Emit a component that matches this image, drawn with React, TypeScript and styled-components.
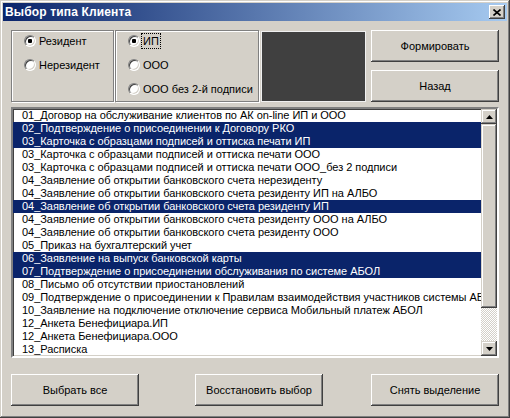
import React from "react";
import styled, { createGlobalStyle } from "styled-components";

const Global = createGlobalStyle`
  html, body { margin: 0; padding: 0; background: #d4d0c8; }
  * { box-sizing: border-box; }
`;

const FONT = `"Liberation Sans", Arial, sans-serif`;

const Window = styled.div`
  width: 510px;
  height: 418px;
  background: #d4d0c8;
  padding: 3px;
  display: flex;
  flex-direction: column;
  font-family: ${FONT};
  font-size: 11px;
  color: #000;
  box-shadow: inset -1px -1px #404040, inset 1px 1px #d4d0c8,
    inset -2px -2px #808080, inset 2px 2px #fff;
`;

const TitleBar = styled.div`
  height: 18px;
  display: flex;
  align-items: center;
  justify-content: space-between;
  padding: 0 2px 0 2px;
  background: linear-gradient(to right, #0a246a, #a6caf0);
`;

const TitleText = styled.span`
  color: #fff;
  font-weight: bold;
  font-size: 12px;
  letter-spacing: 0.15px;
`;

const CloseButton = styled.div`
  width: 16px;
  height: 14px;
  background: #d4d0c8;
  display: flex;
  align-items: center;
  justify-content: center;
  box-shadow: inset -1px -1px #404040, inset 1px 1px #fff,
    inset -2px -2px #808080, inset 2px 2px #d4d0c8;
`;

const Content = styled.div`
  flex: 1;
  display: flex;
  flex-direction: column;
  padding: 9px 8px 9px 8px;
`;

const TopRow = styled.div`
  display: flex;
  height: 72px;
`;

const Group = styled.div<{ $w: number; $ml?: number }>`
  width: ${(p) => p.$w}px;
  margin-left: ${(p) => p.$ml ?? 0}px;
  height: 72px;
  border: 1px solid #808080;
  box-shadow: inset 1px 1px #fff, 1px 1px #fff;
  display: flex;
  flex-direction: column;
  gap: 8px;
  padding: 2px 0 0 12px;
`;

const RadioRow = styled.div`
  height: 16px;
  display: flex;
  align-items: center;
  gap: 0;
  white-space: nowrap;
`;

const RadioCircle = styled.span<{ $on?: boolean }>`
  width: 12px;
  height: 12px;
  border-radius: 50%;
  background: #fff;
  border: 1px solid;
  border-color: #808080 #fff #fff #808080;
  box-shadow: inset 1px 1px #404040, inset -1px -1px #d4d0c8;
  display: flex;
  align-items: center;
  justify-content: center;
  flex-shrink: 0;
  &::after {
    content: "";
    display: ${(p) => (p.$on ? "block" : "none")};
    width: 4px;
    height: 4px;
    border-radius: 1px;
    background: #000;
  }
`;

const RadioLabel = styled.span<{ $focus?: boolean }>`
  padding: 1px 1px;
  margin-left: 1px;
  border: 1px dotted ${(p) => (p.$focus ? "#000" : "transparent")};
`;

const DarkBox = styled.div`
  width: 105px;
  height: 71px;
  margin-left: 2px;
  margin-top: 1px;
  background: #404040;
  border: 1px solid #f0f0f0;
`;

const ButtonColumn = styled.div`
  margin-left: 5px;
  width: 128px;
  display: flex;
  flex-direction: column;
  gap: 8px;
`;

const Button = styled.div<{ $h: number; $w?: number; $ml?: number }>`
  height: ${(p) => p.$h}px;
  width: ${(p) => (p.$w ? `${p.$w}px` : "100%")};
  margin-left: ${(p) => p.$ml ?? 0}px;
  background: #d4d0c8;
  display: flex;
  align-items: center;
  justify-content: center;
  font-size: 11px;
  box-shadow: inset -1px -1px #404040, inset 1px 1px #fff,
    inset -2px -2px #808080, inset 2px 2px #d4d0c8;
`;

const ListBox = styled.div`
  margin-top: 5px;
  height: 251px;
  background: #fff;
  border: 2px solid;
  border-color: #808080 #fff #fff #808080;
  box-shadow: inset 1px 1px #404040, inset -1px -1px #d4d0c8;
  display: flex;
  overflow: hidden;
`;

const Items = styled.div`
  flex: 1;
  min-width: 0;
  overflow: hidden;
`;

const Item = styled.div<{ $sel?: boolean }>`
  height: 13px;
  line-height: 13px;
  padding-left: 9px;
  white-space: nowrap;
  overflow: hidden;
  letter-spacing: -0.04px;
  background: ${(p) => (p.$sel ? "#0a246a" : "transparent")};
  color: ${(p) => (p.$sel ? "#fff" : "#000")};
`;

const ScrollBar = styled.div`
  width: 16px;
  display: flex;
  flex-direction: column;
  background-color: #fff;
  background-image: conic-gradient(#d4d0c8 25%, #fff 0 50%, #d4d0c8 0 75%, #fff 0);
  background-size: 2px 2px;
`;

const ScrollPart = styled.div<{ $h: number }>`
  height: ${(p) => p.$h}px;
  background: #d4d0c8;
  display: flex;
  align-items: center;
  justify-content: center;
  box-shadow: inset -1px -1px #404040, inset 1px 1px #d4d0c8,
    inset -2px -2px #808080, inset 2px 2px #fff;
`;

const TrackFill = styled.div`
  flex: 1;
`;

const BottomRow = styled.div`
  margin-top: 16px;
  display: flex;
`;

const items: [string, boolean][] = [
  ["01_Договор на обслуживание клиентов по АК on-line ИП и ООО", false],
  ["02_Подтверждение о присоединении к Договору РКО", true],
  ["03_Карточка с образцами подписей и оттиска печати ИП", true],
  ["03_Карточка с образцами подписей и оттиска печати ООО", false],
  ["03_Карточка с образцами подписей и оттиска печати ООО_без 2 подписи", false],
  ["04_Заявление об открытии банковского счета нерезиденту", false],
  ["04_Заявление об открытии банковского счета резиденту ИП на АЛБО", false],
  ["04_Заявление об открытии банковского счета резиденту ИП", true],
  ["04_Заявление об открытии банковского счета резиденту ООО на АЛБО", false],
  ["04_Заявление об открытии банковского счета резиденту ООО", false],
  ["05_Приказ на бухгалтерский учет", false],
  ["06_Заявление на выпуск банковской карты", true],
  ["07_Подтверждение о присоединении обслуживания по системе АБОЛ", true],
  ["08_Письмо об отсутствии приостановлений", false],
  ["09_Подтверждение о присоединении к Правилам взаимодействия участников системы АБОЛ", false],
  ["10_Заявление на подключение отключение сервиса Мобильный платеж АБОЛ", false],
  ["12_Анкета Бенефициара.ИП", false],
  ["12_Анкета Бенефициара.ООО", false],
  ["13_Расписка", false],
];

const Arrow = ({ up }: { up?: boolean }) => (
  <svg width="7" height="4" viewBox="0 0 7 4">
    <polygon points={up ? "3.5,0 7,4 0,4" : "0,0 7,0 3.5,4"} fill="#000" />
  </svg>
);

export default function App() {
  return (
    <>
      <Global />
      <Window>
        <TitleBar>
          <TitleText>Выбор типа Клиента</TitleText>
          <CloseButton>
            <svg width="8" height="7" viewBox="0 0 8 7">
              <path d="M0.5 0.5 L7.5 6.5 M7.5 0.5 L0.5 6.5" stroke="#000" strokeWidth="1.6" />
            </svg>
          </CloseButton>
        </TitleBar>
        <Content>
          <TopRow>
            <Group $w={103}>
              <RadioRow>
                <RadioCircle $on />
                <RadioLabel>Резидент</RadioLabel>
              </RadioRow>
              <RadioRow>
                <RadioCircle />
                <RadioLabel>Нерезидент</RadioLabel>
              </RadioRow>
            </Group>
            <Group $w={144} $ml={1}>
              <RadioRow>
                <RadioCircle $on />
                <RadioLabel $focus>ИП</RadioLabel>
              </RadioRow>
              <RadioRow>
                <RadioCircle />
                <RadioLabel>ООО</RadioLabel>
              </RadioRow>
              <RadioRow>
                <RadioCircle />
                <RadioLabel>ООО без 2-й подписи</RadioLabel>
              </RadioRow>
            </Group>
            <DarkBox />
            <ButtonColumn>
              <Button $h={32}>Формировать</Button>
              <Button $h={32}>Назад</Button>
            </ButtonColumn>
          </TopRow>
          <ListBox>
            <Items>
              {items.map(([t, s], i) => (
                <Item key={i} $sel={s}>
                  {t}
                </Item>
              ))}
            </Items>
            <ScrollBar>
              <ScrollPart $h={15}>
                <Arrow up />
              </ScrollPart>
              <ScrollPart $h={184} />
              <TrackFill />
              <ScrollPart $h={15}>
                <Arrow />
              </ScrollPart>
            </ScrollBar>
          </ListBox>
          <BottomRow>
            <Button $h={32} $w={128}>Выбрать все</Button>
            <Button $h={32} $w={128} $ml={56}>Восстановить выбор</Button>
            <Button $h={32} $w={128} $ml={48}>Снять выделение</Button>
          </BottomRow>
        </Content>
      </Window>
    </>
  );
}
